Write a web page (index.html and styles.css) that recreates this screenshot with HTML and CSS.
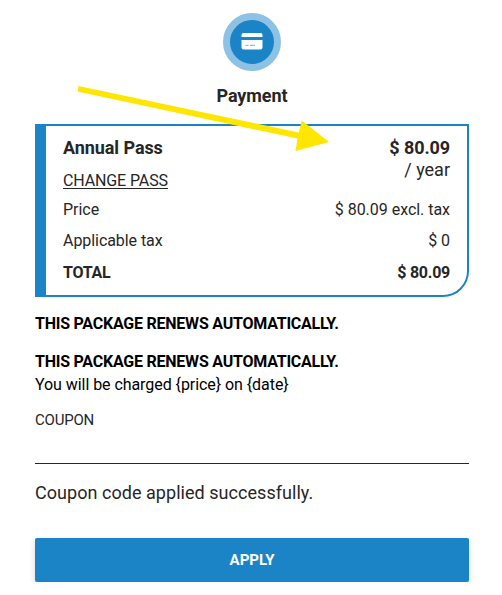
FILE: index.html
```html
<!DOCTYPE html>
<html lang="en">
<head>
<meta charset="utf-8">
<title>Payment</title>
<link rel="stylesheet" href="styles.css">
</head>
<body>
<main class="payment">
  <header class="head">
    <div class="badge">
      <svg width="22" height="18" viewBox="0 0 22 18" aria-hidden="true">
        <path fill="#fff" d="M2.500 0h17A2 2 0 0 1 21.500 2v2H.5V2a2 2 0 0 1 2-2zM.5 7h21V14.500a2 2 0 0 1-2 2h-17a2 2 0 0 1-2-2z"/>
        <path stroke="#6eb0dc" stroke-width="1" d="M4.500 12.300h3M9 12.300h5"/>
      </svg>
    </div>
    <h1 class="title">Payment</h1>
  </header>
  <section class="card">
    <div class="row row-pass">
      <div><h2 class="name">Annual Pass</h2><a class="change">CHANGE PASS</a></div>
      <div class="cost"><strong>$ 80.09</strong><span>/ year</span></div>
    </div>
    <div class="row row-price"><span>Price</span><span>$ 80.09 excl. tax</span></div>
    <div class="row row-tax"><span>Applicable tax</span><span>$ 0</span></div>
    <div class="row row-total"><span>TOTAL</span><span>$ 80.09</span></div>
  </section>
  <p class="renew">THIS PACKAGE RENEWS AUTOMATICALLY.</p>
  <p class="renew renew-detail">THIS PACKAGE RENEWS AUTOMATICALLY.</p>
  <p class="charge">You will be charged {price} on {date}</p>
  <div class="coupon">COUPON</div>
  <p class="message">Coupon code applied successfully.</p>
  <button class="apply">APPLY</button>
</main>
<svg class="arrow" width="502" height="160" viewBox="0 0 502 160" aria-hidden="true">
  <path fill="#ffe600" d="M78.500 86L298.800 132.500 301.800 120.500 329 142 295.500 151 297.500 138.500 77.500 91.500z"/>
</svg>
</body>
</html>
```
FILE: styles.css
```css
* { box-sizing: border-box; }
body {
  margin: 0;
  background: #fff;
  color: #262626;
  font: 16px/22px Roboto, sans-serif;
  letter-spacing: -.06px;
}
h1, h2, p { margin: 0; }
.payment { width: 434px; margin-left: 35px; padding-top: 13px; }
.head { display: flex; flex-direction: column; align-items: center; }
.badge {
  display: flex;
  align-items: center;
  justify-content: center;
  width: 58px;
  height: 58px;
  border: 7px solid #8dc2e4;
  border-radius: 50%;
  background: #1b84c7;
}
.title, .name { font-size: 18px; line-height: 22px; font-weight: 700; letter-spacing: -.07px; }
.title { margin-top: 14px; }
.card {
  height: 173px;
  margin-top: 17px;
  padding: 11px 17px 0;
  border: 2px solid #1b84c7;
  border-left-width: 11px;
  border-bottom-right-radius: 26px;
}
.row { display: flex; justify-content: space-between; }
.row-pass { height: 62px; }
.row-price { letter-spacing: -.03px; }
.change {
  display: block;
  width: max-content;
  height: 20px;
  margin-top: 10px;
  border-bottom: 1px solid #262626;
  line-height: 24px;
  letter-spacing: -.12px;
}
.cost {
  display: flex;
  flex-direction: column;
  text-align: right;
  font-size: 18px;
  line-height: 22px;
  letter-spacing: 0;
}
.cost strong { font-weight: 700; letter-spacing: -.1px; }
.row-tax { margin-top: 9px; }
.row-total { margin-top: 10px; font-weight: 700; letter-spacing: -.25px; }
.renew { margin-top: 16px; color: #000; font-weight: 700; letter-spacing: -.23px; }
.charge { margin-top: 1px; color: #000; }
.coupon {
  height: 55px;
  margin-top: 13px;
  border-bottom: 1px solid #262626;
  font-size: 15px;
  letter-spacing: -.2px;
}
.message { margin-top: 18px; font-size: 18px; letter-spacing: .04px; }
.apply {
  display: block;
  width: 100%;
  height: 44px;
  margin-top: 34px;
  border: 0;
  border-radius: 2px;
  background: #1b84c7;
  box-shadow: 0 3px 6px rgba(0, 0, 0, .16);
  color: #fff;
  font: 700 15px/22px Roboto, sans-serif;
}
.arrow { position: absolute; top: 0; left: 0; }
```
